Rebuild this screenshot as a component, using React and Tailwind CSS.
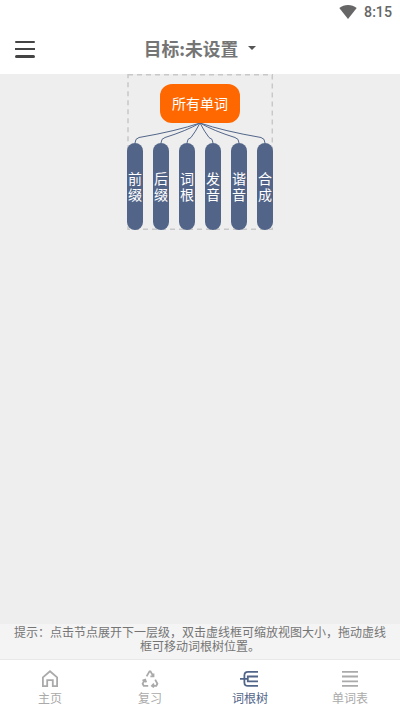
import React from "react";

const branches = ["前缀", "后缀", "词根", "发音", "谐音", "合成"];
const branchX = [8, 34, 60, 86, 112, 138];

function StatusBar() {
  return (
    <div className="flex h-6 items-center justify-end gap-[7px] pr-[8px] text-[#666]">
      <svg className="h-[15px] w-[18px]" viewBox="0 0 18 15" fill="currentColor">
        <path d="M9 14 0.3 3.1C2.8 1.1 5.8.1 9 .1s6.2 1 8.7 3Z" />
      </svg>
      <span className="font-[Roboto,sans-serif] text-[14.2px] leading-[22px] font-medium">8:15</span>
    </div>
  );
}

function Header() {
  return (
    <div className="grid h-[50px] grid-cols-[48px_1fr_48px] items-center">
      <div className="ml-[15px] flex w-5 flex-col gap-[5px]">
        <span className="h-[2.5px] rounded-full bg-[#444]" />
        <span className="h-[2px] bg-[#444]" />
        <span className="h-[2.5px] rounded-full bg-[#444]" />
      </div>
      <div className="flex items-center justify-center gap-[10px] text-[#757575]">
        <span className="mt-[-2px] text-[17.8px] leading-6 font-bold">目标:未设置</span>
        <svg className="mt-[-2px] h-1 w-2" viewBox="0 0 8 4" fill="#555">
          <path d="M0 0h8L4 4Z" />
        </svg>
      </div>
    </div>
  );
}

function RootTree() {
  return (
    <div className="relative mx-auto flex h-[156px] w-[146px] flex-col items-center pt-[10px]">
      <svg className="absolute inset-0 h-full w-full" viewBox="0 0 146 156" fill="none">
        <rect x="1" y="0.8" width="144.3" height="154.4" stroke="#c8c8c8" strokeWidth="1.5" strokeDasharray="5 4" />
      </svg>
      <div className="relative flex h-[39px] w-20 items-center justify-center rounded-[12px] bg-[#ff6800] text-[14px] text-white">
        所有单词
      </div>
      <svg className="relative h-5 w-[146px]" viewBox="0 0 146 20" fill="none" stroke="#526589" strokeWidth="1">
        {branchX.map((x) => {
          const side = x < 73 ? 1 : -1;
          return (
            <path
              key={x}
              d={`M73 0Q${73 + (x - 73) * 0.36} ${Math.abs(x - 73) > 20 ? 8 : 9} ${x + side * 4} 14.5Q${x} 15.5 ${x} 20`}
            />
          );
        })}
      </svg>
      <div className="relative flex gap-[10px]">
        {branches.map((name) => (
          <div
            key={name}
            className="flex h-[87px] w-4 items-center justify-center rounded-full bg-[#526589] pb-[1px] text-center text-[14px] leading-4 text-white"
          >
            <span className="w-[14px] break-all">{name}</span>
          </div>
        ))}
      </div>
    </div>
  );
}

function HomeIcon() {
  return (
    <svg className="h-5 w-5" viewBox="0 0 20 20" fill="none" stroke="currentColor" strokeWidth="1.8">
      <path d="M2.9 17.1V8.3L10 2.2l7.1 6.1v8.8h-4.3v-6H7.2v6Z" />
    </svg>
  );
}

function ReviewIcon() {
  return (
    <svg className="h-5 w-5" viewBox="0 0 20 20" fill="none" stroke="currentColor" strokeWidth="1.8">
      <path d="M6.6 7.4 9.5 2.3h1l2.7 4.8M10.4 7.4h3.1V4.5" />
      <path d="M15.2 10.6l2.2 4.2-1.1 2h-4.1M14 14.6l-2.1 2.2 2.1 1.6" />
      <path d="M8.2 16.8H3.7l-1.1-2 2.3-4.1M2.4 11.5l2.8-.8 1 2.7" />
    </svg>
  );
}

function TreeIcon() {
  return (
    <svg className="h-5 w-5" viewBox="0 0 20 20" fill="none" stroke="currentColor" strokeWidth="1.8">
      <path d="M18 2.9H8Q4.4 2.9 4.4 6.4v7Q4.4 16.9 8 16.9H18M0 9.8h7.8M18 7.5H7.8v4.8H18" />
    </svg>
  );
}

function ListIcon() {
  return (
    <svg className="h-5 w-5" viewBox="0 0 20 20" fill="none" stroke="currentColor" strokeWidth="1.8">
      <path d="M2 2.9h16M2 7.5h16M2 12.3h16M2 16.9h16" />
    </svg>
  );
}

const tabs = [
  { label: "主页", Icon: HomeIcon },
  { label: "复习", Icon: ReviewIcon },
  { label: "词根树", Icon: TreeIcon, active: true },
  { label: "单词表", Icon: ListIcon },
];

export default function App() {
  return (
    <div className="flex h-[710px] w-[400px] flex-col overflow-hidden bg-white font-['Noto_Sans_CJK_SC',sans-serif]">
      <StatusBar />
      <Header />
      <main className="flex-1 bg-[#eee]">
        <RootTree />
      </main>
      <p className="h-[35px] bg-[#f4f4f4] px-3 pt-[1px] text-center text-[12px] leading-[14px] text-[#757575]">
        提示：点击节点展开下一层级，双击虚线框可缩放视图大小，拖动虚线框可移动词根树位置。
      </p>
      <nav className="grid h-[51px] grid-cols-4 border-t border-[#e8e8e8] bg-white">
        {tabs.map(({ label, Icon, active }) => (
          <div
            key={label}
            className={`flex flex-col items-center pt-[9px] text-[12px] leading-[18px] ${active ? "text-[#526589]" : "text-[#aaa]"}`}
          >
            <Icon />
            <span>{label}</span>
          </div>
        ))}
      </nav>
    </div>
  );
}
